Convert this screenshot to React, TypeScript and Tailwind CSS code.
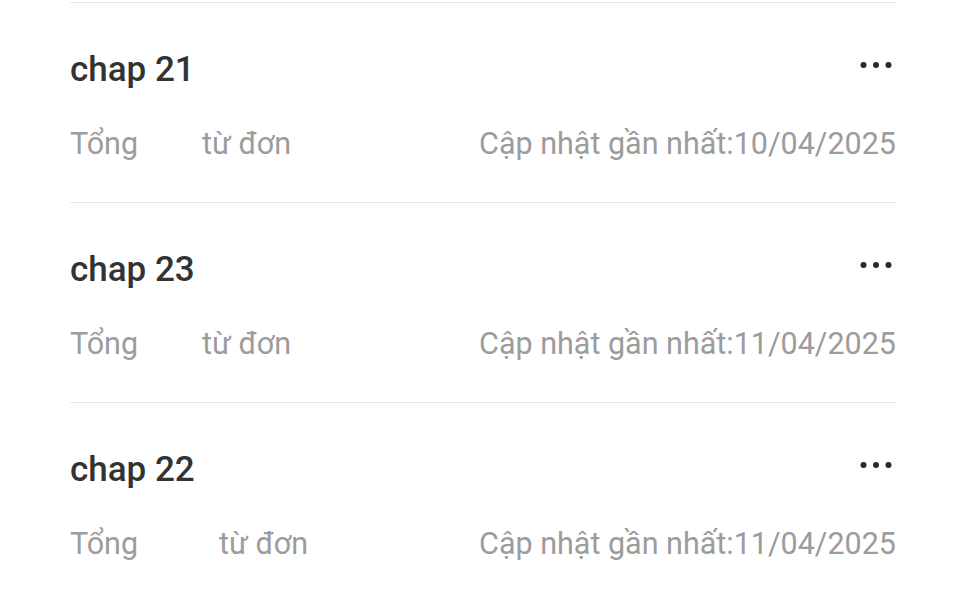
const chapters = [
  { title: "chap 21", gap: "ml-[64px]", date: "10/04/2025" },
  { title: "chap 23", gap: "ml-[64px]", date: "11/04/2025" },
  { title: "chap 22", gap: "ml-[81px]", date: "11/04/2025" },
];

const MoreIcon = () => (
  <svg width="32" height="8" viewBox="0 0 32 8" fill="#2a2a2a" className="mr-[4px] -mt-[9px]">
    <circle cx="3.5" cy="4" r="3" />
    <circle cx="16" cy="4" r="3" />
    <circle cx="28.5" cy="4" r="3" />
  </svg>
);

const App = () => {
  return (
    <div className="w-[967px] h-[600px] overflow-hidden bg-white font-['Roboto',sans-serif] pt-[2px]">
      <div className="ml-[70px] w-[826px]">
        {chapters.map((item, index) => (
          <div key={`chap-${index}`} className="h-[200px] border-t border-[#e8e8e8] flex flex-col">
            <div className="flex items-center justify-between h-[50px] mt-[41px]">
              <span className="text-[35px] font-medium text-[#333333] leading-none">{item.title}</span>
              <MoreIcon />
            </div>
            <div className="flex items-center justify-between mt-[35px] text-[30.5px] text-[#9c9c9c] leading-none">
              <div className="flex">
                <span>Tổng</span>
                <span className={item.gap}>từ đơn</span>
              </div>
              <span>Cập nhật gần nhất:{item.date}</span>
            </div>
          </div>
        ))}
      </div>
    </div>
  );
};

export default App;
